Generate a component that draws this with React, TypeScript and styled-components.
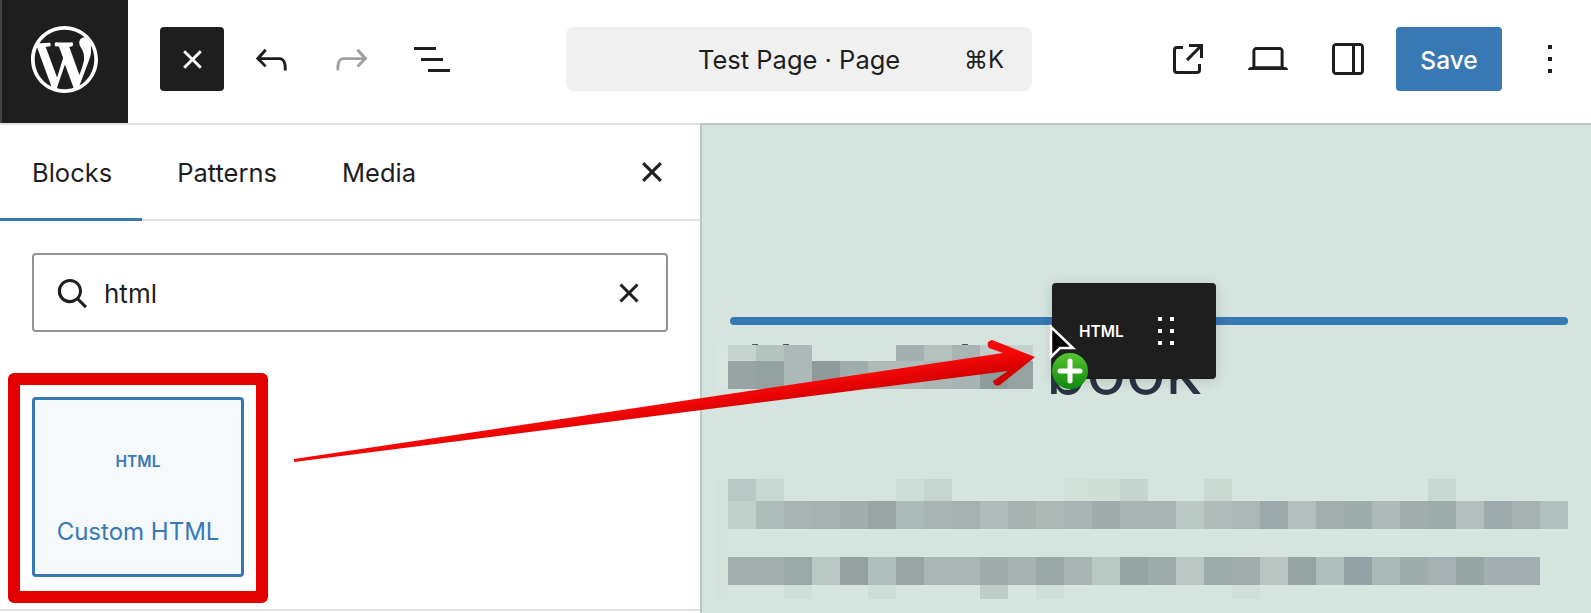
import React from "react";
import styled, { createGlobalStyle } from "styled-components";

const DARK = "#1e1e1e";
const BLUE = "#3878b4";
const CANVAS = "#d5e4de";

const GlobalStyle = createGlobalStyle`
  html, body {
    margin: 0;
    padding: 0;
    height: 613px;
    overflow: hidden;
    background: #fff;
  }
  * {
    box-sizing: border-box;
  }
`;

const ICONS = {
  wordpress:
    "M20 10c0-5.51-4.49-10-10-10C4.48 0 0 4.49 0 10c0 5.52 4.48 10 10 10 5.51 0 10-4.48 10-10zM7.78 15.37L4.37 6.22c.55-.02 1.17-.08 1.17-.08.5-.06.44-1.13-.06-1.11 0 0-1.45.11-2.37.11-.18 0-.37 0-.58-.01C4.12 2.69 6.87 1.11 10 1.11c2.33 0 4.45.87 6.05 2.34-.68-.11-1.65.39-1.65 1.58 0 .74.45 1.36.9 2.1.35.61.55 1.36.55 2.46 0 1.49-1.4 5-1.4 5l-3.03-8.37c.54-.02.82-.17.82-.17.5-.05.44-1.25-.06-1.22 0 0-1.44.12-2.38.12-.87 0-2.33-.12-2.33-.12-.5-.03-.56 1.2-.06 1.22l.92.08 1.26 3.41zM17.41 10c.24-.64.74-1.87.43-4.25.7 1.29 1.05 2.71 1.05 4.25 0 3.29-1.73 6.24-4.4 7.78.97-2.59 1.94-5.2 2.92-7.78zM6.1 18.09C3.12 16.65 1.11 13.53 1.11 10c0-1.3.23-2.48.72-3.59C3.25 10.3 4.67 14.2 6.1 18.09zm4.03-6.63l2.58 6.98c-.86.29-1.76.45-2.71.45-.79 0-1.57-.11-2.29-.33.81-2.38 1.62-4.74 2.42-7.1z",
  close:
    "M12 13.06l3.712 3.713 1.061-1.06L13.061 12l3.712-3.712-1.06-1.06L12 10.938 8.288 7.227l-1.061 1.06L10.939 12l-3.712 3.712 1.06 1.061L12 13.061z",
  undo: "M18.3 11.7c-.6-.6-1.4-.9-2.3-.9H6.7l2.9-3.3-1.1-1-4.5 5L8.5 16l1-1-2.7-2.7H16c.5 0 .9.2 1.3.5 1 1 1 3.4 1 4.5v.3h1.5v-.2c0-1.5 0-4.3-1.5-5.7z",
  redo: "M15.6 6.5l-1.1 1 2.9 3.3H8c-.9 0-1.7.3-2.3.9-1.4 1.5-1.4 4.2-1.4 5.6v.2h1.5v-.3c0-1.1 0-3.5 1-4.5.3-.3.7-.5 1.3-.5h9.2L14.5 15l1.1 1.1 4.6-4.6-4.6-5z",
  list: "M3 6h11v1.5H3V6Zm3.5 5.5h11V13h-11v-1.5ZM21 17H10v1.5h11V17Z",
  external:
    "M19.5 4.5h-7V6h4.44l-5.97 6.03 1.06 1.06L18 7.06v4.44h1.5v-7Zm-13 1a2 2 0 0 0-2 2v10a2 2 0 0 0 2 2h10a2 2 0 0 0 2-2v-3H17v3a.5.5 0 0 1-.5.5h-10a.5.5 0 0 1-.5-.5v-10a.5.5 0 0 1 .5-.5h3V5.5h-3Z",
  desktop:
    "M20.5 16h-.7V8c0-1.1-.9-2-2-2H6.2c-1.1 0-2 .9-2 2v8h-.7c-.8 0-1.5.7-1.5 1.5h20c0-.8-.7-1.5-1.5-1.5zM5.7 8c0-.3.2-.5.5-.5h11.6c.3 0 .5.2.5.5v7.6H5.7V8z",
  sidebar:
    "M18 4H6c-1.1 0-2 .9-2 2v12c0 1.1.9 2 2 2h12c1.1 0 2-.9 2-2V6c0-1.1-.9-2-2-2zM6 18.5c-.3 0-.5-.2-.5-.5V6c0-.3.2-.5.5-.5h8v13H6zm12.5-.5c0 .3-.2.5-.5.5h-2.5v-13H18c.3 0 .5.2.5.5v12z",
  more: "M13 19h-2v-2h2v2zm0-6h-2v-2h2v2zm0-6h-2V5h2v2z",
  search:
    "M13 5c-3.3 0-6 2.7-6 6 0 1.4.5 2.7 1.3 3.7l-3.8 3.8 1.1 1.1 3.8-3.8c1 .8 2.3 1.3 3.7 1.3 3.3 0 6-2.7 6-6S16.3 5 13 5zm0 10.5c-2.5 0-4.5-2-4.5-4.5s2-4.5 4.5-4.5 4.5 2 4.5 4.5-2 4.5-4.5 4.5z",
  drag: "M8 7h2V5H8v2zm0 6h2v-2H8v2zm0 6h2v-2H8v2zm6-14v2h2V5h-2zm0 8h2v-2h-2v2zm0 6h2v-2h-2v2z",
};

// pixelated bits of the page content, one colour per 28px block
const TITLE_ROWS = [
  ["#c6d4cf", "#b5c3bf", "#adb9b8", "", "", "", "#a4b0af", "#b5c2be", "#a9b5b4", "#c0cdc9", "#c4d2cd"],
  ["#98a4a4", "#94a1a1", "#adb9b6", "#8f9b9b", "#a0adad", "#adbab6", "#b0bbb9", "#aab6b3", "#a8b4b3", "#8f9c9c", "#97a3a3"],
];

const TEXT_ROWS = [
  ["#b9c8c4", "#c9d7d2", "", "", "", "", "#cedcd7", "#c7d5d0", "", "", "", "", "#d1dfd9", "#d0ded8", "#c6d4cf", "", "", "#cbd9d3", "", "", "", "", "", "", "", "#c9d7d2", "", "", "", ""],
  ["#c1d0cb", "#adbdb9", "#a9b5b4", "#a7b3b2", "#a2aeae", "#99a5a5", "#adbbb8", "#a9b5b5", "#a5b1b1", "#b1bcba", "#a7b3b0", "#aeb9b6", "#a9b5b5", "#a1adad", "#a9b5b5", "#a9b5b5", "#bbc9c4", "#afbcb9", "#abb8b5", "#9ca9aa", "#b3bfbd", "#a3afaf", "#a0adad", "#aebbb9", "#a2aeae", "#9eabab", "#b3bfbd", "#9eabac", "#a7b3b3", "#b2c0bd"],
  Array(30).fill(""),
  ["#a3afae", "#a3afae", "#9ba8a8", "#bac8c4", "#94a1a0", "#b0bfbc", "#99a5a5", "#aab6b3", "#aab6b3", "#a1adad", "#a8b4b1", "#9aa7a7", "#a9b5b2", "#bac8c4", "#96a3a3", "#9eabab", "#b9c6c2", "#9eabab", "#a2aeae", "#b9c4c1", "#96a3a3", "#b1bfbc", "#94a1a5", "#acbab7", "#a0adad", "#a4b0b1", "#97a4a4", "#a3afb0", "#a3afb0", ""],
  ["", "", "#d0ded8", "", "", "#cedcd7", "", "", "", "#bfcdc9", "", "#cfddd7", "", "", "", "", "", "", "#d0ded8", "", "", "", "", "", "", "", "", "", "", ""],
];

export default function App() {
  return (
    <Page>
      <GlobalStyle />
      <Header>
        <LogoBox>
          <Icon viewBox="0 0 20 20" $size={67} $color="#fff">
            <path d={ICONS.wordpress} />
          </Icon>
        </LogoBox>
        <Tools>
          <CloseButton>
            <Icon viewBox="0 0 24 24" $size={47} $color="#fff">
              <path d={ICONS.close} />
            </Icon>
          </CloseButton>
          <Icon viewBox="0 0 24 24" $size={47} $left={24}>
            <path d={ICONS.undo} />
          </Icon>
          <Icon viewBox="0 0 24 24" $size={47} $left={33} $color="#a0a0a0">
            <path d={ICONS.redo} />
          </Icon>
          <Icon viewBox="0 0 24 24" $size={48} $left={33}>
            <path d={ICONS.list} />
          </Icon>
          <CommandBar>
            <CommandTitle>Test Page · Page</CommandTitle>
            <Shortcut>⌘K</Shortcut>
          </CommandBar>
          <Icon viewBox="0 0 24 24" $size={48} $left={132}>
            <path d={ICONS.external} />
          </Icon>
          <Icon viewBox="0 0 24 24" $size={48} $left={32}>
            <path d={ICONS.desktop} />
          </Icon>
          <Icon viewBox="0 0 24 24" $size={48} $left={32}>
            <path d={ICONS.sidebar} />
          </Icon>
          <SaveButton>Save</SaveButton>
          <Icon viewBox="0 0 24 24" $size={48} $left={24}>
            <path d={ICONS.more} />
          </Icon>
        </Tools>
      </Header>

      <Main>
        <Sidebar>
          <TabBar>
            <Tab $active>Blocks</Tab>
            <Tab>Patterns</Tab>
            <Tab>Media</Tab>
            <TabClose>
              <Icon viewBox="0 0 24 24" $size={50}>
                <path d={ICONS.close} />
              </Icon>
            </TabClose>
          </TabBar>
          <SearchBox>
            <Icon viewBox="0 0 24 24" $size={48} $mirror>
              <path d={ICONS.search} />
            </Icon>
            <SearchText>html</SearchText>
            <Icon viewBox="0 0 24 24" $size={48}>
              <path d={ICONS.close} />
            </Icon>
          </SearchBox>
          <HighlightFrame>
            <BlockCard>
              <BlockGlyph>HTML</BlockGlyph>
              <BlockName>Custom HTML</BlockName>
            </BlockCard>
          </HighlightFrame>
        </Sidebar>

        <Canvas>
          <DropLine />
          <TitleRow>
            <TitleMosaic>
              {TITLE_ROWS.flat().map((color, i) => (
                <Block key={i} $color={color} />
              ))}
              <Tick $x={24} />
              <Tick $x={55} />
              <Tick $x={234} />
            </TitleMosaic>
            <TitleWord>book</TitleWord>
          </TitleRow>
          <TextMosaic>
            {TEXT_ROWS.flat().map((color, i) => (
              <Block key={i} $color={color} />
            ))}
          </TextMosaic>
          <DragChip>
            <ChipLabel>HTML</ChipLabel>
            <Icon viewBox="0 0 24 24" $size={48} $left={19} $color="#fff">
              <path d={ICONS.drag} />
            </Icon>
          </DragChip>
        </Canvas>
      </Main>

      <Annotation viewBox="0 0 1591 613">
        <defs>
          <linearGradient id="arrowRed" gradientUnits="userSpaceOnUse" x1="1003" y1="353" x2="1006" y2="373">
            <stop offset="0" stopColor="#f70707" />
            <stop offset="1" stopColor="#cf0000" />
          </linearGradient>
          <linearGradient id="plusGreen" x1="0" y1="0" x2="0" y2="1">
            <stop offset="0" stopColor="#58c430" />
            <stop offset="1" stopColor="#0c8a0c" />
          </linearGradient>
        </defs>
        <path
          d="M294 459 L1003 353 L989 348 Q985 342 992 340 L1035 357 L1000 385 Q994 387 993 381 L1008 371 L294 462 Z"
          fill="url(#arrowRed)"
        />
        <path
          d="M1051 327 L1073 348 L1060 348 L1051 357 Z"
          fill="#000"
          stroke="#fff"
          strokeWidth="2.5"
        />
        <circle cx="1070" cy="371" r="18" fill="url(#plusGreen)" />
        <path d="M1070 361 V381 M1060 371 H1080" stroke="#fff" strokeWidth="5" strokeLinecap="round" />
      </Annotation>
    </Page>
  );
}

const Page = styled.div`
  position: relative;
  width: 1591px;
  height: 613px;
  overflow: hidden;
  display: flex;
  flex-direction: column;
  font-family: Inter, "Liberation Sans", sans-serif;
  color: ${DARK};
`;

const Header = styled.header`
  display: flex;
  height: 123px;
  background: #fff;
`;

const LogoBox = styled.div`
  width: 128px;
  display: flex;
  align-items: center;
  justify-content: center;
  padding: 0 2px 5px 0;
  background: ${DARK};
  border-left: 2px solid #444;
`;

const Tools = styled.div`
  flex: 1;
  display: flex;
  align-items: center;
  height: 64px;
  margin-top: 27px;
  padding-left: 32px;
`;

const Icon = styled.svg<{ $size: number; $left?: number; $color?: string; $mirror?: boolean }>`
  flex: none;
  display: block;
  width: ${(p) => p.$size}px;
  height: ${(p) => p.$size}px;
  margin-left: ${(p) => p.$left ?? 0}px;
  fill: ${(p) => p.$color ?? DARK};
  transform: ${(p) => (p.$mirror ? "scaleX(-1)" : "none")};
`;

const CloseButton = styled.div`
  width: 64px;
  height: 64px;
  display: flex;
  align-items: center;
  justify-content: center;
  background: ${DARK};
  border-radius: 4px;
`;

const CommandBar = styled.div`
  width: 466px;
  height: 64px;
  margin-left: 110px;
  padding-left: 132px;
  display: flex;
  align-items: center;
  background: #f0f0f0;
  border-radius: 8px;
  font-size: 25.5px;
`;

const CommandTitle = styled.span`
  width: 266px;
  white-space: nowrap;
`;

const Shortcut = styled.span`
  white-space: nowrap;
  font-size: 24px;
  font-family: Inter, "DejaVu Sans", sans-serif;
`;

const SaveButton = styled.div`
  width: 106px;
  height: 64px;
  margin-left: 24px;
  padding-top: 1px;
  display: flex;
  align-items: center;
  justify-content: center;
  background: ${BLUE};
  border-radius: 4px;
  color: #fff;
  font-size: 24.5px;
  font-weight: 500;
`;

const Main = styled.main`
  flex: 1;
  min-height: 0;
  display: flex;
`;

const Sidebar = styled.aside`
  width: 700px;
  height: 490px;
  background: #fff;
  border-top: 2px solid #e0e0e0;
  display: flex;
  flex-direction: column;
  position: relative;

  &::after {
    content: "";
    position: absolute;
    left: 0;
    right: 0;
    bottom: 2px;
    height: 2px;
    background: #e0e0e0;
  }
`;

const TabBar = styled.div`
  height: 96px;
  display: flex;
  gap: 3px;
  border-bottom: 2px solid #e0e0e0;
`;

const Tab = styled.div<{ $active?: boolean }>`
  height: 96px;
  padding: 1px 30px 0 32px;
  display: flex;
  align-items: center;
  font-size: 25.5px;
  border-bottom: 3px solid ${(p) => (p.$active ? BLUE : "transparent")};
`;

const TabClose = styled.div`
  margin-left: auto;
  margin-right: 23px;
  display: flex;
  align-items: center;
  height: 94px;
`;

const SearchBox = styled.div`
  width: 636px;
  height: 79px;
  margin: 32px 0 0 32px;
  padding: 0 13px 0 14px;
  display: flex;
  align-items: center;
  border: 2px solid #949494;
  border-radius: 4px;
`;

const SearchText = styled.span`
  flex: 1;
  margin-left: 8px;
  padding-top: 2px;
  font-size: 26px;
`;

const HighlightFrame = styled.div`
  width: 260px;
  height: 230px;
  margin: 41px 0 0 8px;
  padding: 12px 12px 14px;
  border: 12px solid #e50000;
  border-radius: 6px;
  background: #fff;
`;

const BlockCard = styled.div`
  height: 180px;
  display: flex;
  flex-direction: column;
  align-items: center;
  border: 3px solid ${BLUE};
  border-radius: 4px;
  background: #f5f9fc;
  color: ${BLUE};
`;

const BlockGlyph = styled.div`
  margin-top: 52px;
  font-size: 15.5px;
  font-weight: 600;
  line-height: 20px;
`;

const BlockName = styled.div`
  margin-top: 45px;
  font-size: 24px;
  line-height: 30px;
  white-space: nowrap;
`;

const Canvas = styled.section`
  flex: 1;
  position: relative;
  overflow: hidden;
  padding: 192px 23px 0 26px;
  background: ${CANVAS};
  border-top: 2px solid #b9c6c1;
  border-left: 2px solid #b9c6c1;
`;

const DropLine = styled.div`
  height: 8px;
  margin-left: 2px;
  background: ${BLUE};
  border-radius: 4px;
`;

const TitleRow = styled.div`
  height: 44px;
  margin-top: 20px;
  display: flex;
  align-items: flex-start;
`;

const TitleMosaic = styled.div`
  position: relative;
  flex: none;
  width: 305px;
  display: grid;
  grid-template-columns: repeat(11, 28px);
  grid-template-rows: 16px 28px;
  overflow-x: clip;
  overflow-y: visible;
  box-shadow: -12px 0 0 #d9e6e0;
`;

const TextMosaic = styled.div`
  width: 852px;
  margin: 90px 0 0 -12px;
  display: grid;
  grid-template-columns: repeat(30, 28px);
  grid-template-rows: 22px 28px 28px 28px 14px;
  border-left: 12px solid #d3e1db;
`;

const Block = styled.div<{ $color: string }>`
  background: ${(p) => p.$color || "transparent"};
`;

const Tick = styled.span<{ $x: number }>`
  position: absolute;
  top: -1px;
  left: ${(p) => p.$x}px;
  width: 6px;
  height: 1px;
  background: #4a5560;
`;

const TitleWord = styled.div`
  margin-left: 13px;
  height: 44px;
  font-size: 66px;
  line-height: 50px;
  color: #2a3343;
`;

const DragChip = styled.div`
  position: absolute;
  left: 350px;
  top: 158px;
  width: 164px;
  height: 96px;
  padding-left: 27px;
  display: flex;
  align-items: center;
  background: ${DARK};
  border-radius: 4px;
  box-shadow: 0 2px 14px rgba(0, 0, 0, 0.14);
`;

const ChipLabel = styled.span`
  width: 44px;
  color: #fff;
  font-size: 15.5px;
  font-weight: 600;
`;

const Annotation = styled.svg`
  position: absolute;
  left: 0;
  top: 0;
  width: 1591px;
  height: 613px;
  pointer-events: none;
`;
